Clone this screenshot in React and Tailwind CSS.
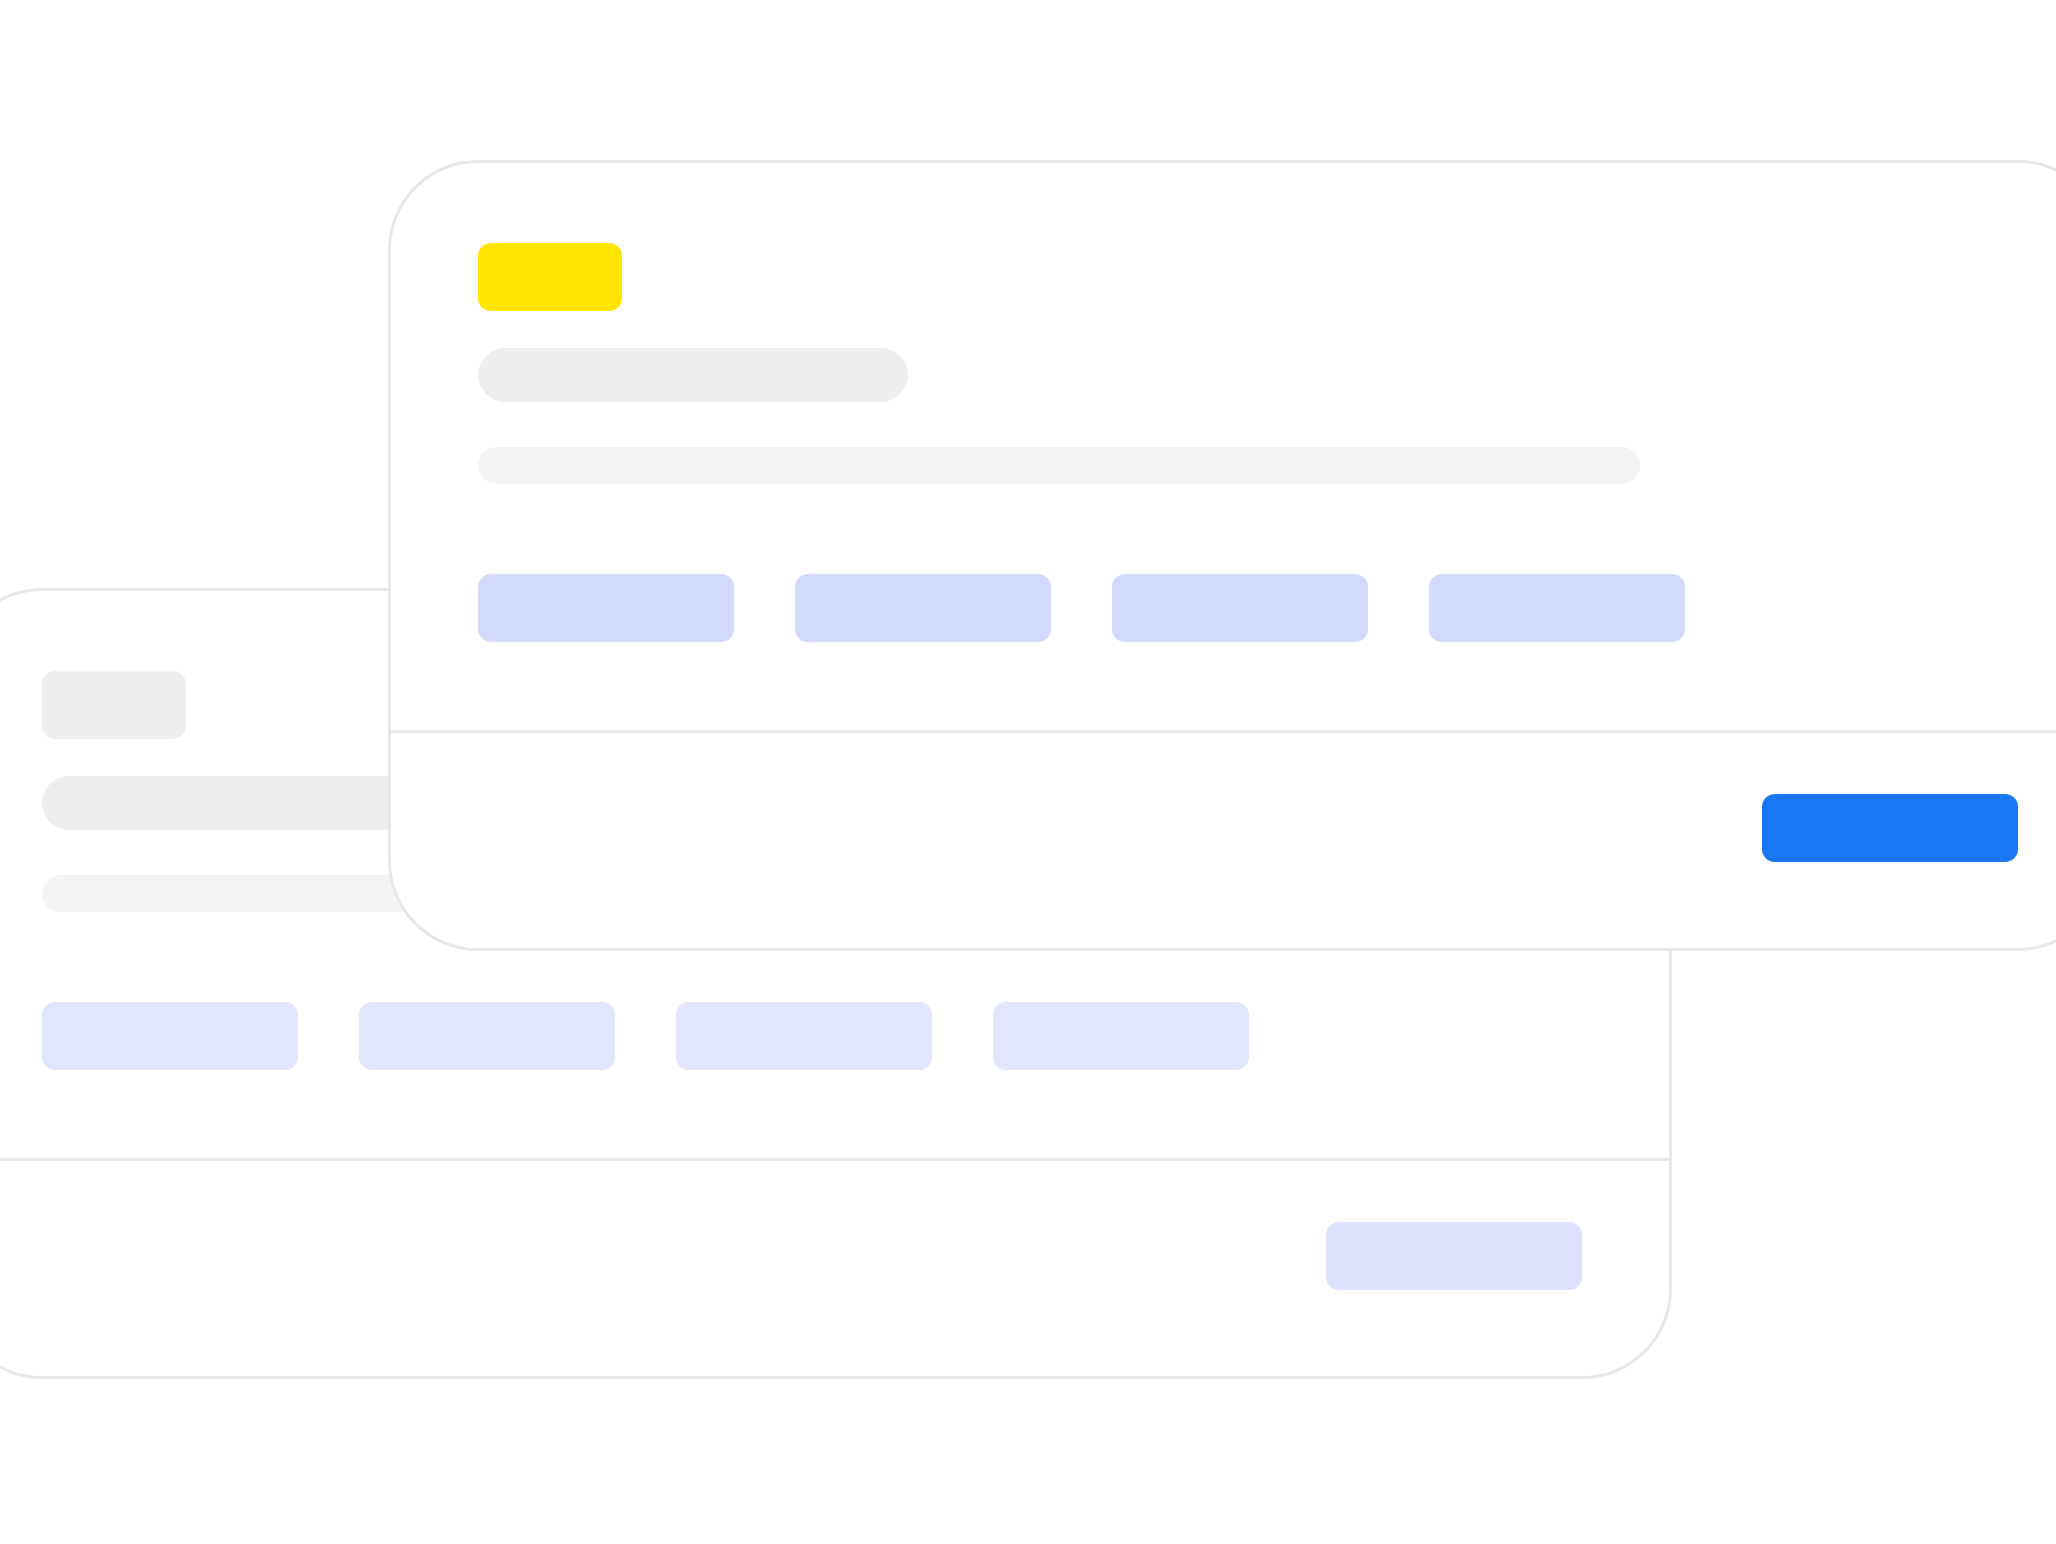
import React from "react";

const tags = [0, 1, 2, 3];

function FormCard({ accent, tagColor, buttonColor, className }) {
  return (
    <div
      className={`absolute w-[1720px] rounded-[90px] border-[3px] border-[#E5E8EB] bg-white flex flex-col ${className}`}
    >
      <div className="pt-[80px] pl-[87px] pb-[88px] flex flex-col">
        <div className={`w-[144px] h-[68px] rounded-[13px] ${accent}`} />
        <div className="mt-[37px] w-[430px] h-[54px] rounded-full bg-[#EDEEEF]" />
        <div className="mt-[45px] w-[1162px] h-[37px] rounded-full bg-[#F3F4F4]" />
        <div className="mt-[90px] flex gap-[61px]">
          {tags.map((t) => (
            <div key={t} className={`w-[256px] h-[68px] rounded-[13px] ${tagColor}`} />
          ))}
        </div>
      </div>
      <div className="border-t-[3px] border-[#E5E8EB] pt-[61px] pb-[86px] pr-[87px] flex justify-end">
        <div className={`w-[256px] h-[68px] rounded-[13px] ${buttonColor}`} />
      </div>
    </div>
  );
}

export default function App() {
  return (
    <div className="relative w-[2056px] h-[1544px] overflow-hidden bg-white">
      {/* card behind */}
      <FormCard
        className="left-[-48px] top-[588px]"
        accent="bg-[#EDEEEF]"
        tagColor="bg-[#E1E5FD]"
        buttonColor="bg-[#DDE1FD]"
      />
      {/* card in front */}
      <FormCard
        className="left-[388px] top-[160px]"
        accent="bg-[#FFE500]"
        tagColor="bg-[#D3D9FC]"
        buttonColor="bg-[#1877F2]"
      />
    </div>
  );
}
